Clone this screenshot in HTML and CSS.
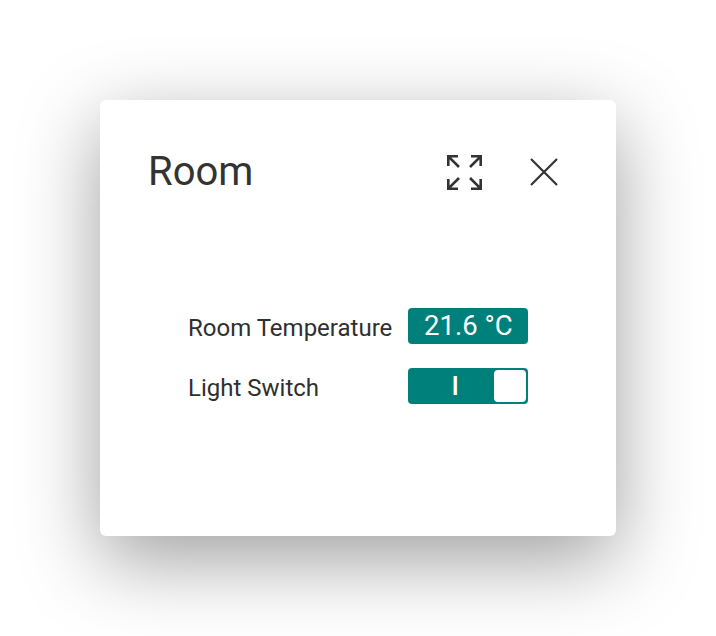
FILE: index.html
```html
<!doctype html>
<html>
<head>
  <title>Room</title>
  <link rel="stylesheet" href="styles.css">
</head>
<body>
  <div class="dialog">
    <header class="dialog-head">
      <h1>Room</h1>
      <div class="actions">
        <button class="icon-btn expand" title="Expand">
          <svg width="35" height="35" viewBox="0 0 35 35" fill="none" stroke="#333" stroke-width="2.6">
            <path d="M1.3 11 V1.3 H11 M1.3 1.3 L12 12"/>
            <path d="M24 1.3 H33.7 V11 M33.7 1.3 L23 12"/>
            <path d="M1.3 24 V33.7 H11 M1.3 33.7 L12 23"/>
            <path d="M33.7 24 V33.7 H24 M33.7 33.7 L23 23"/>
          </svg>
        </button>
        <button class="icon-btn close" title="Close">
          <svg width="28" height="28" viewBox="0 0 28 28" fill="none" stroke="#333" stroke-width="2.2">
            <path d="M1 1 L27 27 M27 1 L1 27"/>
          </svg>
        </button>
      </div>
    </header>

    <!-- Readings and controls for the room -->
    <div class="dialog-body">
      <div class="fields">
        <span class="label">Room Temperature</span>
        <span class="badge">21.6 °C</span>
        <span class="label">Light Switch</span>
        <div class="toggle on">
          <span class="toggle-text">I</span>
          <span class="knob"></span>
        </div>
      </div>
    </div>
  </div>
</body>
</html>
```

FILE: styles.css
```css
* {
  box-sizing: border-box;
  margin: 0;
  padding: 0;
}

html, body { height: 100% }

body {
  display: flex;
  align-items: center;
  justify-content: center;
  font-family: Roboto, "Liberation Sans", sans-serif;
  background: #fff;
  color: #333;
}

.dialog {
  width: 516px;
  height: 436px;
  background: #fff;
  border-radius: 6px;
  padding: 48px 58px 48px 48px;
  box-shadow: 0 24px 80px rgba(0, 0, 0, 0.38);
  display: flex;
  flex-direction: column;
}

.dialog-head {
  display: flex;
  align-items: center;
  justify-content: space-between;
  height: 48px;
}

h1 {
  font-size: 40px;
  font-weight: 400;
  line-height: 48px;
}

.actions {
  display: flex;
  align-items: center;
  gap: 48px;
}

.icon-btn {
  display: flex;
  border: none;
  background: transparent;
  cursor: pointer;
}

.dialog-body {
  padding-top: 112px;
  padding-left: 40px;
}

.fields {
  display: grid;
  grid-template-columns: auto 120px;
  column-gap: 16px;
  row-gap: 24px;
  align-items: center;
  width: max-content;
}

.label {
  font-size: 24px;
  line-height: 32px;
  padding-top: 4px;
  color: #2f2f2f;
}

.badge {
  height: 36px;
  border-radius: 4px;
  background: #00807a;
  color: #fff;
  font-size: 27.5px;
  line-height: 36px;
  text-align: center;
}

.toggle {
  display: flex;
  align-items: center;
  height: 36px;
  border-radius: 4px;
  background: #00807a;
  padding: 2px;
}

.toggle-text {
  flex: 1;
  text-align: center;
  padding-left: 6px;
  color: #fff;
  font-size: 26px;
  font-weight: 500;
  line-height: 32px;
}

.knob {
  width: 32px;
  height: 32px;
  border-radius: 4px;
  background: #fff;
}
```
